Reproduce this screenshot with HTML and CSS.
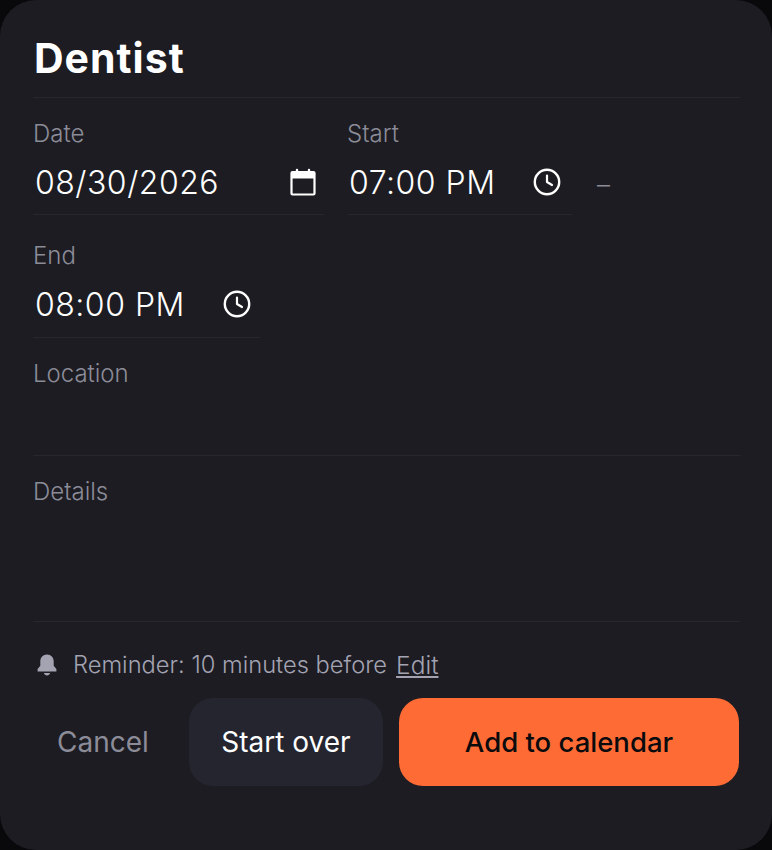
FILE: index.html
```html
<!DOCTYPE html>
<html lang="en">
<head>
    <meta charset="UTF-8">
    <meta name="viewport" content="width=device-width, initial-scale=1.0">
    <title>Dentist</title>
    <link rel="stylesheet" href="styles.css">
</head>
<body>
    <main class="sheet">
        <h1 class="sheet-title">Dentist</h1>

        <div class="when">
            <div class="field field-date">
                <div class="field-label">Date</div>
                <div class="field-value">
                    <span class="value-text">08/30/2026</span>
                    <svg class="icon" width="28" height="28" viewBox="0 0 28 28" aria-hidden="true">
                        <path d="M3.500 4h21a1 1 0 0 1 1 1v20.500a1 1 0 0 1-1 1h-21a1 1 0 0 1-1-1V5a1 1 0 0 1 1-1Z" fill="none" stroke="#fff" stroke-width="2.200"/>
                        <path d="M2.500 4h23v6.500h-23z" fill="#fff"/>
                        <path d="M8 2v3M20 2v3" stroke="#fff" stroke-width="2.400" stroke-linecap="round"/>
                    </svg>
                </div>
            </div>
            <div class="field field-start">
                <div class="field-label">Start</div>
                <div class="field-value">
                    <span class="value-text">07:00 PM</span>
                    <svg class="icon" width="28" height="28" viewBox="0 0 28 28" aria-hidden="true">
                        <circle cx="14" cy="14" r="12.200" fill="none" stroke="#fff" stroke-width="2.400"/>
                        <path d="M14 7.500V14l5 3" fill="none" stroke="#fff" stroke-width="2.200" stroke-linecap="round" stroke-linejoin="round"/>
                    </svg>
                </div>
            </div>
            <span class="dash">–</span>
            <div class="field field-end">
                <div class="field-label">End</div>
                <div class="field-value">
                    <span class="value-text">08:00 PM</span>
                    <svg class="icon" width="28" height="28" viewBox="0 0 28 28" aria-hidden="true">
                        <circle cx="14" cy="14" r="12.200" fill="none" stroke="#fff" stroke-width="2.400"/>
                        <path d="M14 7.500V14l5 3" fill="none" stroke="#fff" stroke-width="2.200" stroke-linecap="round" stroke-linejoin="round"/>
                    </svg>
                </div>
            </div>
        </div>

        <div class="block block-location">
            <div class="field-label">Location</div>
        </div>
        <div class="block block-details">
            <div class="field-label">Details</div>
        </div>

        <div class="reminder">
            <svg class="bell" width="20" height="24" viewBox="0 0 20 24" aria-hidden="true">
                <path d="M10 1.500c-4 0-6.700 3-6.700 7v4.300L.6 16v2.500h18.800V16l-2.700-3.200V8.500c0-4-2.700-7-6.700-7Z" fill="#a3a3b2"/>
                <path d="M6.800 20h6.400c-.5 1.500-1.700 2.400-3.200 2.400S7.300 21.500 6.800 20Z" fill="#a3a3b2"/>
            </svg>
            <span>Reminder: 10 minutes before</span>
            <a class="reminder-edit" href="#">Edit</a>
        </div>

        <div class="actions">
            <button class="btn btn-cancel">Cancel</button>
            <button class="btn btn-over">Start over</button>
            <button class="btn btn-add">Add to calendar</button>
        </div>
    </main>
</body>
</html>
```

FILE: styles.css
```css
* {
    box-sizing: border-box;
}

body {
    margin: 0;
    width: 772px;
    height: 850px;
    overflow: hidden;
    background-color: #09090b;
    font-family: "Inter", "Liberation Sans", sans-serif;
}

.sheet {
    height: 850px;
    padding: 0 32px 0 33px;
    background-color: #1c1c22;
    border-radius: 36px;
}

.sheet-title {
    margin: 0;
    height: 98px;
    padding: 35px 0 0 1px;
    border-bottom: 1px solid #27272e;
    color: #fff;
    font-size: 41px;
    line-height: 46px;
    font-weight: 700;
    letter-spacing: 1px;
}

.field-label {
    height: 26px;
    padding-top: 1px;
    color: #8c8c99;
    font-size: 24px;
    line-height: 26px;
    font-weight: 300;
}

.when {
    display: flex;
    flex-wrap: wrap;
    align-items: flex-start;
    padding-top: 22px;
}

.field-value {
    display: flex;
    justify-content: space-between;
    align-items: center;
    height: 66px;
    margin-top: 3px;
    padding: 0 7px 0 2px;
    border-bottom: 1px solid #27272e;
}

.value-text {
    padding-top: 2px;
    color: #fff;
    font-size: 32px;
    line-height: 40px;
    font-weight: 300;
    letter-spacing: 0.500px;
}

.icon {
    flex: none;
}

.field-date {
    width: 291px;
    margin-right: 24px;
}

.field-start {
    width: 224px;
}

.field-start .field-label {
    margin-left: -1px;
}

.field-start .field-value {
    padding: 0 11px 0 1px;
}

.dash {
    margin: 50px 0 0 25px;
    color: #8c8c99;
    font-size: 26px;
    line-height: 30px;
    font-weight: 300;
}

.field-end {
    width: 227px;
    margin-top: 27px;
    flex-basis: 227px;
}

.field-end .field-value {
    height: 67px;
    padding-right: 9px;
}

.block {
    border-bottom: 1px solid #27272e;
}

.block-location {
    height: 118px;
    padding-top: 22px;
}

.block-details {
    height: 166px;
    padding-top: 22px;
}

.reminder {
    display: flex;
    align-items: center;
    height: 32px;
    margin-top: 27px;
    color: #a3a3b2;
    font-size: 23.700px;
    line-height: 32px;
    font-weight: 300;
}

.bell {
    margin: 0 16px 0 4px;
}

.reminder-edit {
    margin-left: 9px;
    color: #a3a3b2;
    font-size: 24.500px;
}

.actions {
    display: flex;
    gap: 16px;
    margin-top: 17px;
}

.btn {
    height: 88px;
    border: none;
    border-radius: 24px;
    font-family: inherit;
    font-size: 28px;
    font-weight: 400;
    cursor: pointer;
}

.btn-cancel {
    width: 140px;
    background: none;
    color: #8c8c99;
}

.btn-over {
    width: 194px;
    background-color: #24252f;
    color: #fff;
}

.btn-add {
    width: 340px;
    background-color: #ff6b35;
    color: #0b0b0e;
    font-size: 27.500px;
    font-weight: 500;
}
```
